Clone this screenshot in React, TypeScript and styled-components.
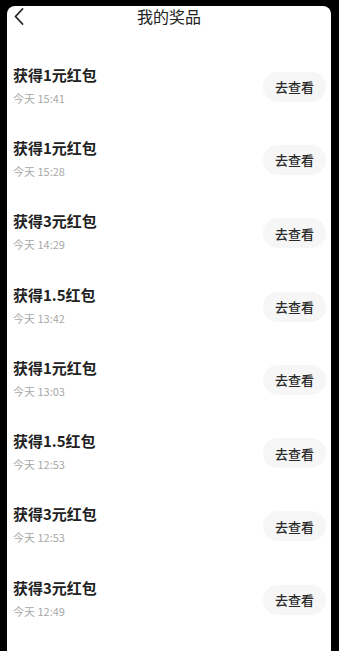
import React from "react";
import styled, { createGlobalStyle } from "styled-components";

const GlobalStyle = createGlobalStyle`
  html, body {
    margin: 0;
    padding: 0;
    background: #000;
  }
  body {
    font-family: "Noto Sans CJK SC", "Noto Sans", sans-serif;
    color: #222;
  }
`;

const Screen = styled.div`
  width: 339px;
  height: 651px;
  background: #000;
  padding: 6px 8px 0 7px;
  box-sizing: border-box;
  overflow: hidden;
`;

const Panel = styled.div`
  background: #fff;
  border-radius: 8px 8px 0 0;
  height: 100%;
  display: flex;
  flex-direction: column;
`;

const Header = styled.header`
  height: 44px;
  display: flex;
  align-items: flex-start;
  justify-content: center;
  position: relative;
`;

const BackButton = styled.button`
  position: absolute;
  left: 7px;
  top: 1px;
  width: 14px;
  height: 18px;
  padding: 0;
  border: none;
  background: none;
  display: flex;
  align-items: center;
`;

const Title = styled.h1`
  margin: 0;
  font-size: 16px;
  line-height: 20px;
  font-weight: 400;
  color: #222;
`;

const List = styled.ul`
  list-style: none;
  margin: 0;
  padding: 0;
`;

const Row = styled.li`
  height: 73.3px;
  display: flex;
  align-items: center;
  justify-content: space-between;
  padding: 0 5px 0 6px;
`;

const Info = styled.div`
  display: flex;
  flex-direction: column;
  gap: 6px;
  margin-top: -4px;
`;

const PrizeName = styled.span`
  font-size: 15px;
  line-height: 20px;
  font-weight: 700;
  color: #222;
`;

const Time = styled.span`
  font-size: 11px;
  line-height: 14px;
  color: #a8a8a8;
`;

const ViewButton = styled.button`
  width: 63px;
  height: 30px;
  border: none;
  border-radius: 15px;
  background: #f6f6f6;
  font-family: inherit;
  font-size: 13px;
  font-weight: 500;
  color: #2a2a2a;
  padding: 0;
`;

const prizes = [
  { name: "获得1元红包", time: "今天 15:41" },
  { name: "获得1元红包", time: "今天 15:28" },
  { name: "获得3元红包", time: "今天 14:29" },
  { name: "获得1.5红包", time: "今天 13:42" },
  { name: "获得1元红包", time: "今天 13:03" },
  { name: "获得1.5红包", time: "今天 12:53" },
  { name: "获得3元红包", time: "今天 12:53" },
  { name: "获得3元红包", time: "今天 12:49" },
];

export default function App() {
  return (
    <>
      <GlobalStyle />
      <Screen>
        <Panel>
          <Header>
            <BackButton aria-label="返回">
              <svg width="10" height="17" viewBox="0 0 10 17" fill="none">
                <path d="M8.5 1 L1.5 8.5 L8.5 16" stroke="#222" strokeWidth="1.8" strokeLinecap="round" strokeLinejoin="round" />
              </svg>
            </BackButton>
            <Title>我的奖品</Title>
          </Header>
          <List>
            {prizes.map((p, i) => (
              <Row key={i}>
                <Info>
                  <PrizeName>{p.name}</PrizeName>
                  <Time>{p.time}</Time>
                </Info>
                <ViewButton>去查看</ViewButton>
              </Row>
            ))}
          </List>
        </Panel>
      </Screen>
    </>
  );
}
